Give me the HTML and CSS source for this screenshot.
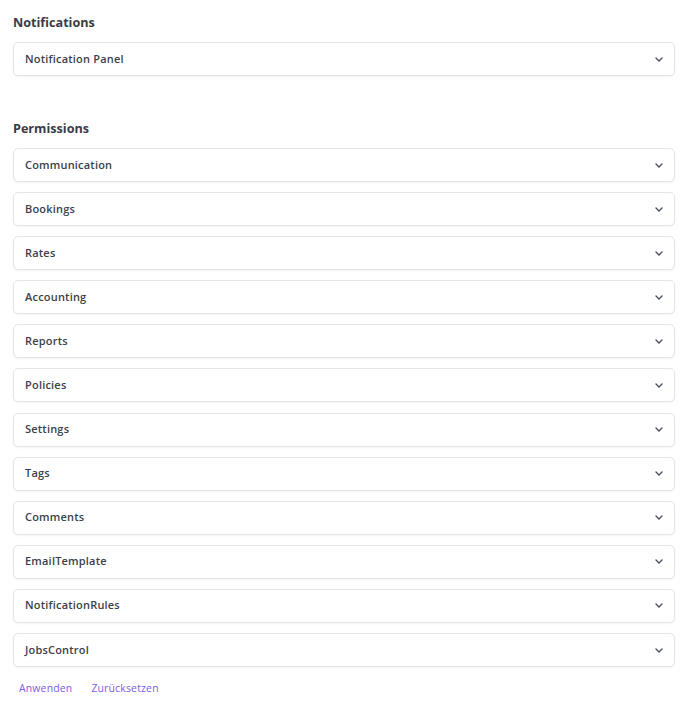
FILE: index.html
```html
<!DOCTYPE html>
<html>
<head>
<meta charset="utf-8">
<link rel="stylesheet" href="styles.css">
</head>
<body>
<div class="page">
  <section class="section">
    <h3 class="section-title">Notifications</h3>
    <div class="list">
      <div class="card"><span class="card-label">Notification Panel</span><svg class="chev" viewBox="0 0 8 5"><path d="M1 1l3 3 3-3"/></svg></div>
    </div>
  </section>
  <section class="section section-perm">
    <h3 class="section-title">Permissions</h3>
    <div class="list">
      <div class="card"><span class="card-label">Communication</span><svg class="chev" viewBox="0 0 8 5"><path d="M1 1l3 3 3-3"/></svg></div>
      <div class="card"><span class="card-label">Bookings</span><svg class="chev" viewBox="0 0 8 5"><path d="M1 1l3 3 3-3"/></svg></div>
      <div class="card"><span class="card-label">Rates</span><svg class="chev" viewBox="0 0 8 5"><path d="M1 1l3 3 3-3"/></svg></div>
      <div class="card"><span class="card-label">Accounting</span><svg class="chev" viewBox="0 0 8 5"><path d="M1 1l3 3 3-3"/></svg></div>
      <div class="card"><span class="card-label">Reports</span><svg class="chev" viewBox="0 0 8 5"><path d="M1 1l3 3 3-3"/></svg></div>
      <div class="card"><span class="card-label">Policies</span><svg class="chev" viewBox="0 0 8 5"><path d="M1 1l3 3 3-3"/></svg></div>
      <div class="card"><span class="card-label">Settings</span><svg class="chev" viewBox="0 0 8 5"><path d="M1 1l3 3 3-3"/></svg></div>
      <div class="card"><span class="card-label">Tags</span><svg class="chev" viewBox="0 0 8 5"><path d="M1 1l3 3 3-3"/></svg></div>
      <div class="card"><span class="card-label">Comments</span><svg class="chev" viewBox="0 0 8 5"><path d="M1 1l3 3 3-3"/></svg></div>
      <div class="card"><span class="card-label">EmailTemplate</span><svg class="chev" viewBox="0 0 8 5"><path d="M1 1l3 3 3-3"/></svg></div>
      <div class="card"><span class="card-label">NotificationRules</span><svg class="chev" viewBox="0 0 8 5"><path d="M1 1l3 3 3-3"/></svg></div>
      <div class="card"><span class="card-label">JobsControl</span><svg class="chev" viewBox="0 0 8 5"><path d="M1 1l3 3 3-3"/></svg></div>
    </div>
  </section>
  <div class="actions">
    <button class="link-btn">Anwenden</button>
    <button class="link-btn">Zurücksetzen</button>
  </div>
</div>
</body>
</html>
```

FILE: styles.css
```css
html, body {
  margin: 0;
  padding: 0;
  background: #ffffff;
}
body {
  font-family: "Open Sans", "Noto Sans", sans-serif;
  color: #3b3f4a;
}
.page {
  padding: 13px 13px 0 13px;
}
.section-title {
  margin: 0 0 9px 0;
  font-size: 12.6px;
  line-height: 20px;
  font-weight: 700;
  color: #383c47;
}
.section-perm {
  margin-top: 43px;
}
.list {
  display: flex;
  flex-direction: column;
  gap: 10.1px;
}
.card {
  box-sizing: border-box;
  height: 34px;
  border: 1px solid #e3e5e8;
  border-radius: 5px;
  box-shadow: 0 1px 2px rgba(0,0,0,0.05);
  display: flex;
  align-items: center;
  justify-content: space-between;
  padding: 0 10px 0 11px;
}
.card-label {
  font-size: 11px;
  letter-spacing: 0.2px;
  font-weight: 600;
  color: #3b3f4a;
  margin-bottom: 2px;
}
.chev {
  fill: none;
  stroke: #4b5060;
  stroke-width: 1.4;
  stroke-linecap: round;
  stroke-linejoin: round;
  width: 8px;
  height: 5px;
  margin-right: 1px;
}
.actions {
  display: flex;
  gap: 19px;
  padding: 13px 0 0 6px;
}
.link-btn {
  border: 0;
  background: none;
  padding: 0;
  font-family: "Open Sans", "Noto Sans", sans-serif;
  font-size: 10.4px;
  letter-spacing: 0.2px;
  line-height: 16px;
  font-weight: 500;
  color: #7b5ce6;
  cursor: pointer;
}
```
